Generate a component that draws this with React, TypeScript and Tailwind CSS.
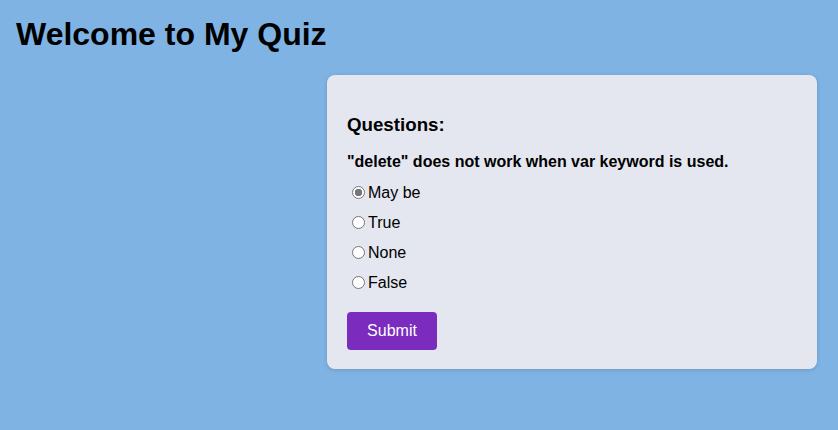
const options = ['May be', 'True', 'None', 'False'];

export default function App() {
  return (
    <div className="min-h-[430px] bg-[#7fb3e3] font-['Liberation_Sans',Arial,sans-serif] text-black">
      <h1 className="m-0 pl-4 pt-4 text-[32px] font-bold leading-[37px]">Welcome to My Quiz</h1>
      <div className="mt-[22px] flex justify-end pr-[21px]">
        <div className="w-[490px] rounded-lg bg-[#e4e7f0] px-5 pb-[19px] pt-5 shadow-[0_1px_4px_rgba(0,0,0,0.15)]">
          <h3 className="mt-[19px] text-[18.72px] font-bold leading-[21.5px]">Questions:</h3>
          <p className="mt-[17px] text-base font-bold leading-[18.4px]">
            "delete" does not work when var keyword is used.
          </p>
          <div className="mt-[7px] flex flex-col">
            {options.map((opt, i) => (
              <label key={opt} className="flex h-[30px] items-center text-base">
                <input
                  type="radio"
                  name="answer"
                  defaultChecked={i === 0}
                  className="ml-[5px] mr-[3px] h-[13px] w-[13px] appearance-none rounded-full border border-[#767676] bg-white checked:bg-[radial-gradient(circle,#767676_0_3.5px,white_4px)]"
                />
                {opt}
              </label>
            ))}
          </div>
          <button className="mt-[14px] block h-[38px] w-[90px] rounded bg-[#7b2cbf] text-base text-white">Submit</button>
        </div>
      </div>
    </div>
  );
}
